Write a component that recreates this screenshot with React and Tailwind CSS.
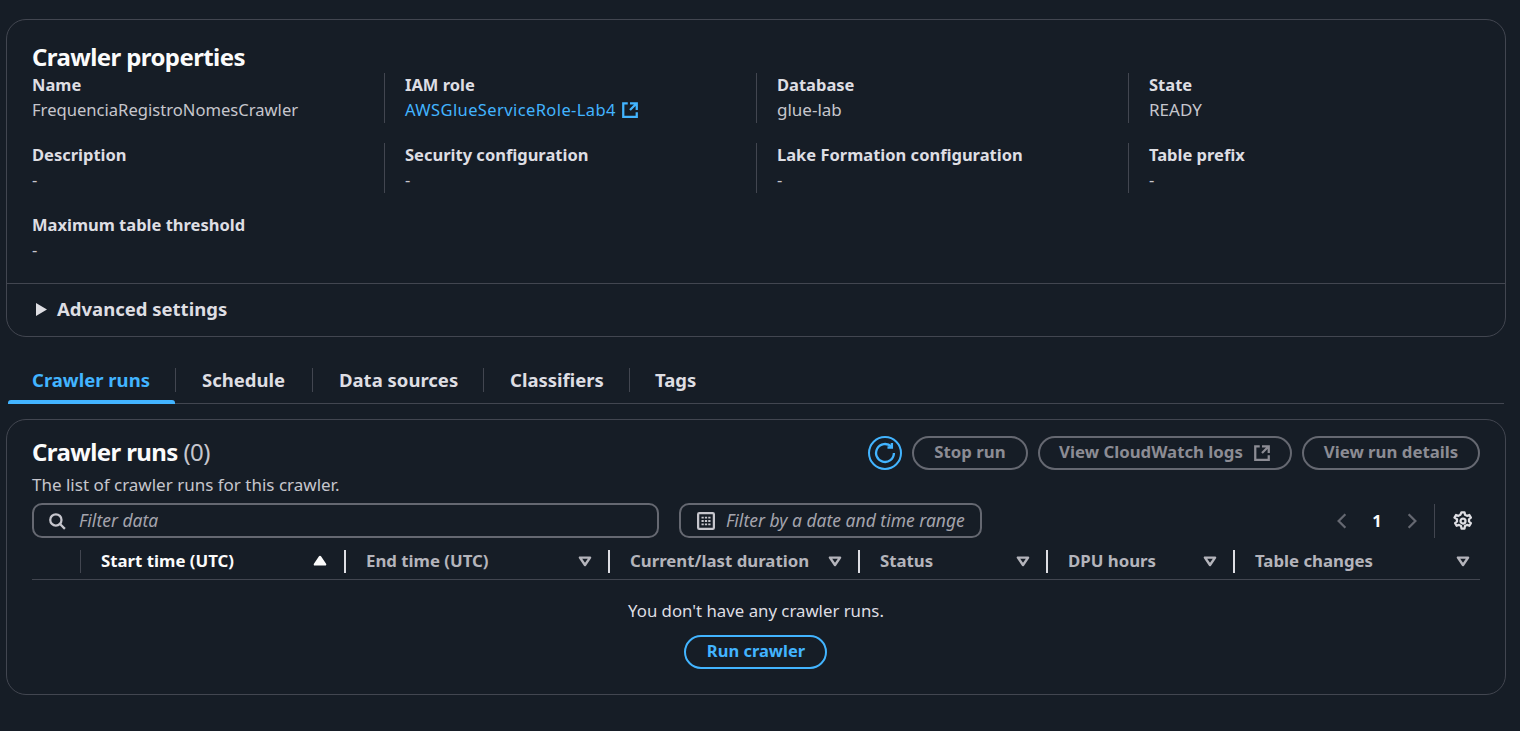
const LinkOut = ({ className = "" }) => (
  <svg viewBox="0 0 16 16" fill="none" stroke="currentColor" strokeWidth="2" className={className}>
    <path d="M14 8.01v-6H8M14.02 2 8 8.01M6 2.01H2v12h12v-3.99" />
  </svg>
);
const Refresh = () => (
  <svg viewBox="0 0 16 16" fill="none" stroke="#42b4ff" strokeWidth="1.7" className="w-[22px] h-[22px]">
    <path d="M14.5 8a6.5 6.5 0 1 1-1.9-4.6" />
    <path d="M13 0.8v3.2h-3.2" />
  </svg>
);
const Caret = ({ up }) => (
  <svg viewBox="0 0 16 16" className="w-[18px] h-[18px] shrink-0" fill={up ? "#fbfbfb" : "none"} stroke={up ? "#fbfbfb" : "#b4b4bb"} strokeWidth="2.2" strokeLinejoin="round">
    {up ? <path d="M8 4.5l4.5 6.5h-9z" /> : <path d="M3.5 5h9L8 11.5z" />}
  </svg>
);

const props = [
  ["Name", "FrequenciaRegistroNomesCrawler", "text-[16.6px]"],
  ["IAM role", "link"],
  ["Database", "glue-lab", "text-[17px]"],
  ["State", "READY", "text-[17px]"],
  ["Description", "-"],
  ["Security configuration", "-"],
  ["Lake Formation configuration", "-"],
  ["Table prefix", "-"],
  ["Maximum table threshold", "-"],
];

const cols = [
  ["Start time (UTC)", "w-[263px] pl-[20px] pr-[15px]", true],
  ["End time (UTC)", "w-[264px] pl-[20px] pr-[14px]"],
  ["Current/last duration", "w-[250px] pl-[20px] pr-[14px]"],
  ["Status", "w-[188px] pl-[20px] pr-[14px]"],
  ["DPU hours", "w-[187px] pl-[20px] pr-[14px]"],
  ["Table changes", "flex-1 pl-[20px] pr-[8px]"],
];

export default function App() {
  return (
    <div className="min-h-[731px] bg-[#161d26] text-[#dedee3] px-[6px] pt-[19px] text-[16.5px] font-['Noto_Sans',sans-serif] leading-5">
      <div className="w-[1500px] border border-[#424650] rounded-[20px]">
        <div className="px-[25px] pt-[23px] h-[263px]">
          <h2 className="text-[24px] leading-[28px] font-bold text-[#fbfbfb] tracking-[-0.6px] mb-[2px]">Crawler properties</h2>
          <div className="grid grid-cols-[352px_372px_372px_1fr] gap-y-5">
            {props.map(([k, v, size], i) => (
              <div key={k} className={`h-[50px] pt-[2px] ${i % 4 === 0 ? "" : "border-l border-[#424650] pl-[20px]"}`}>
                <div className="font-bold leading-[20px] mb-[5px]">{k}</div>
                {v === "link" ? (
                  <a className="text-[#42b4ff] flex items-center gap-[5px] tracking-[0.4px]">AWSGlueServiceRole-Lab4 <LinkOut className="w-[18px] h-[18px]" /></a>
                ) : (
                  <div className={`text-[#c6c6cd] ${size || ""}`}>{v}</div>
                )}
              </div>
            ))}
          </div>
        </div>
        <div className="border-t border-[#424650] h-[53px] flex items-center pl-[29px] pb-[2px] gap-[10px] font-bold text-[18.5px]">
          <svg viewBox="0 0 12 14" className="w-[11px] h-[13px]" fill="#dedee3"><path d="M0 0l12 7-12 7z" /></svg>
          Advanced settings
        </div>
      </div>

      <div className="mt-[30px] ml-[2px] w-[1496px] h-[37px] border-b border-[#424650] flex font-bold text-[18.5px] text-[#dedee3]">
        {[
          ["Crawler runs", "text-[#42b4ff] w-[168px] pl-[24px]"],
          ["Schedule", "w-[137px] pl-[26px]"],
          ["Data sources", "w-[171px] pl-[26px]"],
          ["Classifiers", "w-[146px] pl-[26px]"],
          ["Tags", "pl-[25px]"],
        ].map(([t, c], i) => (
          <div key={t} className={`relative h-[36px] pt-[1px] flex items-start ${c}`}>
            <span className="leading-[24px]">{t}</span>
            {i < 4 && <span className="absolute right-0 top-[1px] h-[24px] border-r border-[#424650]" />}
            {i === 0 && <span className="absolute left-0 right-[1px] bottom-[-1px] h-[4px] bg-[#42b4ff] rounded-t-[3px]" />}
          </div>
        ))}
      </div>

      <div className="mt-[15px] w-[1500px] h-[276px] border border-[#424650] rounded-[20px] px-[25px] pt-[16px]">
        <div className="flex items-start justify-between">
          <div>
            <h2 className="text-[24px] leading-[32px] font-bold text-[#fbfbfb] tracking-[-0.6px]">Crawler runs <span className="font-normal text-[#c6c6cd]">(0)</span></h2>
            <p className="text-[#c6c6cd] text-[17px] mt-[6px] leading-[22px]">The list of crawler runs for this crawler.</p>
          </div>
          <div className="flex items-center gap-[10px] font-bold text-[#8c8c94] text-[16.8px]">
            <div className="w-[34px] h-[34px] rounded-full border-2 border-[#42b4ff] flex items-center justify-center"><Refresh /></div>
            <div className="h-[34px] w-[116px] rounded-full border-2 border-[#656871] flex items-center justify-center pb-[2px]">Stop run</div>
            <div className="h-[34px] w-[254px] rounded-full border-2 border-[#656871] flex items-center justify-center gap-[10px] pb-[2px]">View CloudWatch logs <LinkOut className="w-[18px] h-[18px] mt-[2px]" /></div>
            <div className="h-[34px] w-[178px] rounded-full border-2 border-[#656871] flex items-center justify-center pb-[2px]">View run details</div>
          </div>
        </div>
        <div className="flex items-center mt-[7px] h-[35px]">
          <div className="w-[627px] h-[35px] rounded-[10px] border-2 border-[#656871] flex items-center pl-[14px] gap-[13px] italic text-[17.5px] text-[#a4a4ad]">
            <svg viewBox="0 0 16 16" className="w-[18px] h-[18px]" fill="none" stroke="#c6c6cd" strokeWidth="2"><circle cx="7" cy="7" r="5" /><path d="M10.5 10.5L15 15" /></svg>
            <span className="pb-[2px]">Filter data</span>
          </div>
          <div className="ml-[20px] w-[303px] h-[35px] rounded-[10px] border-2 border-[#656871] flex items-center pl-[16px] gap-[11px] italic text-[17.5px] text-[#a4a4ad]">
            <svg viewBox="0 0 16 16" className="w-[18px] h-[18px]" fill="none" stroke="#c6c6cd" strokeWidth="2"><rect x="1" y="1" width="14" height="14" rx="1" /><path d="M4 5h2M7 5h2M10 5h2M4 8h2M7 8h2M10 8h2M4 11h2M7 11h2M10 11h2" strokeWidth="1.6" /></svg>
            <span className="pb-[2px]">Filter by a date and time range</span>
          </div>
          <div className="ml-auto flex items-center h-[35px] mr-[7px]">
            <svg viewBox="0 0 16 16" className="w-[18px] h-[18px]" fill="none" stroke="#656871" strokeWidth="2"><path d="M11 2L5 8l6 6" /></svg>
            <span className="w-[52px] text-center font-bold text-[#fbfbfb]">1</span>
            <svg viewBox="0 0 16 16" className="w-[18px] h-[18px]" fill="none" stroke="#656871" strokeWidth="2"><path d="M5 2l6 6-6 6" /></svg>
            <span className="ml-[13px] mr-[18px] h-[34px] border-l border-[#424650]" />
            <svg viewBox="0 0 16 16" className="w-[20px] h-[20px]" fill="none" stroke="#dedee3" strokeWidth="1.8" strokeLinejoin="round">
              <circle cx="8" cy="8" r="2" />
              <path d="M6.8 1h2.4l.4 2 1.6.9 1.9-.7 1.2 2.1-1.5 1.3v1.8l1.5 1.3-1.2 2.1-1.9-.7-1.6.9-.4 2H6.8l-.4-2-1.6-.9-1.9.7-1.2-2.1 1.5-1.3V6.6L1.2 5.3l1.2-2.1 1.9.7 1.6-.9z" />
            </svg>
          </div>
        </div>
        <div className="flex h-[42px] pt-[5px] border-b border-[#424650] items-center font-bold text-[#b4b4bb] text-[16.8px] pl-[48px]">
          <span className="h-[23px] border-l border-[#424650]" />
          {cols.map(([t, w, active], i) => (
            <div key={t} className={`${w} flex items-center h-[23px] ${i ? "border-l-2 border-[#dedee3]" : ""} ${active ? "text-[#fbfbfb]" : ""}`}>
              <span className="flex-1">{t}</span>
              <Caret up={active} />
            </div>
          ))}
        </div>
        <div className="flex flex-col items-center pt-[21px]">
          <p className="text-[#dedee3] text-[16.8px]">You don't have any crawler runs.</p>
          <div className="mt-[14px] mr-[2px] pl-[2px] pb-[2px] w-[143px] h-[34px] rounded-full border-2 border-[#42b4ff] text-[#42b4ff] font-bold flex items-center justify-center">Run crawler</div>
        </div>
      </div>
    </div>
  );
}
